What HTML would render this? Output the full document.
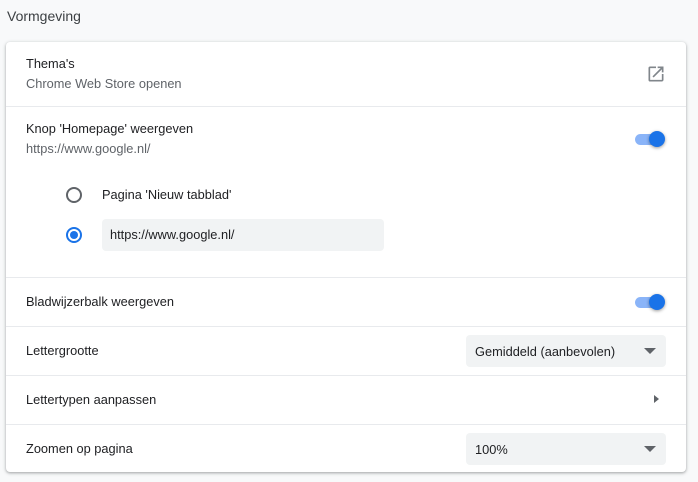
<!DOCTYPE html>
<html><head><meta charset="utf-8"><style>
*{margin:0;padding:0;box-sizing:border-box}
body{width:698px;height:482px;background:#f8f9fa;font-family:"Liberation Sans",sans-serif;font-size:13px;color:#202124;position:relative;overflow:hidden}
.h{position:absolute;left:7px;top:8px;font-size:14px;color:#3c4043}
.card{position:absolute;left:6px;top:42px;width:680px;height:430px;background:#fff;border-radius:4px;box-shadow:0 1px 2px rgba(60,64,67,.3),0 1px 3px 1px rgba(60,64,67,.15)}
.t{position:absolute;font-size:12.8px;color:#202124;white-space:nowrap}
.s{color:#5f6368}
.hr{position:absolute;left:0;right:0;height:1px;background:#e8eaed}
.tg{position:absolute;width:34px;height:20px}
.tg .tr{position:absolute;left:2px;top:5px;width:26px;height:11px;border-radius:6px;background:#8ab4f8}
.tg .kn{position:absolute;left:16px;top:2px;width:16px;height:16px;border-radius:50%;background:#1a73e8;box-shadow:0 1px 3px rgba(0,0,0,.4)}
.dd{position:absolute;left:460px;width:200px;height:32px;background:#f1f3f4;border-radius:4px;padding:9px 9px;font-size:12.8px}
.dd:after{content:"";position:absolute;right:10px;top:13px;border-left:6px solid transparent;border-right:6px solid transparent;border-top:6px solid #5f6368}
</style></head><body>
<div class="h">Vormgeving</div>
<div class="card">
 <div class="t" style="left:20px;top:14px">Thema's</div>
 <div class="t s" style="left:20px;top:34px">Chrome Web Store openen</div>
 <svg style="position:absolute;left:640px;top:22px" width="20" height="20" viewBox="0 0 24 24"><path fill="#80868b" d="M19 19H5V5h7V3H5a2 2 0 0 0-2 2v14a2 2 0 0 0 2 2h14c1.1 0 2-.9 2-2v-7h-2v7zM14 3v2h3.59l-9.83 9.83 1.41 1.41L19 6.41V10h2V3h-7z"/></svg>
 <div class="hr" style="top:64px"></div>
 <div class="t" style="left:20px;top:79px">Knop 'Homepage' weergeven</div>
 <div class="t s" style="left:20px;top:99px">https://www.google.nl/</div>
 <div class="tg" style="left:627px;top:87px"><div class="tr"></div><div class="kn"></div></div>
 <div style="position:absolute;left:60px;top:145px;width:16px;height:16px;border:2px solid #5f6368;border-radius:50%"></div>
 <div class="t" style="left:96px;top:145px">Pagina 'Nieuw tabblad'</div>
 <div style="position:absolute;left:60px;top:185px;width:16px;height:16px;border:2px solid #1a73e8;border-radius:50%"><div style="position:absolute;left:2px;top:2px;width:8px;height:8px;border-radius:50%;background:#1a73e8"></div></div>
 <div style="position:absolute;left:96px;top:177px;width:282px;height:32px;background:#f1f3f4;border-radius:4px"></div>
 <div class="t" style="left:104px;top:185px">https://www.google.nl/</div>
 <div class="hr" style="top:235px"></div>
 <div class="t" style="left:20px;top:252px">Bladwijzerbalk weergeven</div>
 <div class="tg" style="left:627px;top:250px"><div class="tr"></div><div class="kn"></div></div>
 <div class="hr" style="top:284px"></div>
 <div class="t" style="left:20px;top:301px">Lettergrootte</div>
 <div class="dd" style="top:293px">Gemiddeld (aanbevolen)</div>
 <div class="hr" style="top:333px"></div>
 <div class="t" style="left:20px;top:350px">Lettertypen aanpassen</div>
 <div style="position:absolute;left:648px;top:353px;border-top:4px solid transparent;border-bottom:4px solid transparent;border-left:5px solid #5f6368"></div>
 <div class="hr" style="top:382px"></div>
 <div class="t" style="left:20px;top:399px">Zoomen op pagina</div>
 <div class="dd" style="top:391px">100%</div>
</div>
</body></html>
